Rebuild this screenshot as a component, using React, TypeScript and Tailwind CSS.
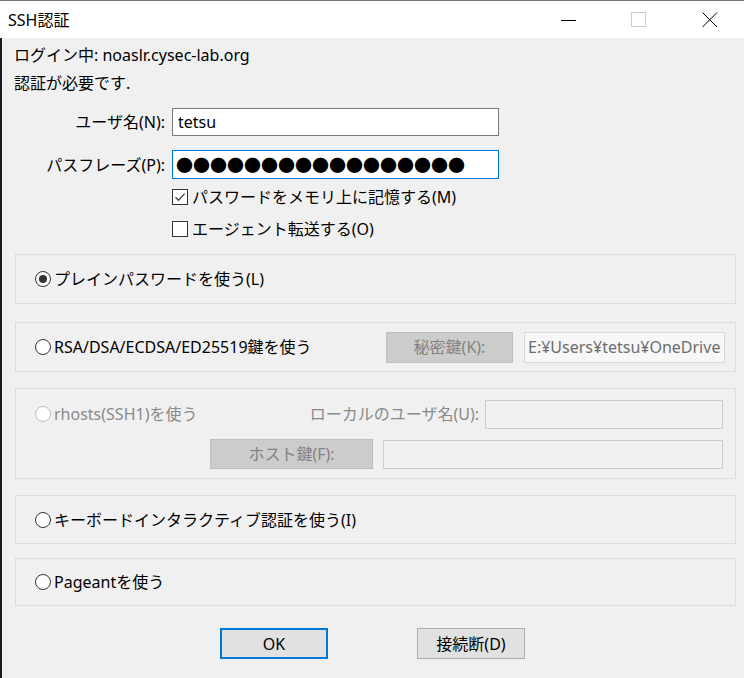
import React from 'react';

const font = { fontFamily: '"Noto Sans", "Noto Sans CJK JP", sans-serif' };

function Radio({ checked = false, disabled = false }: { checked?: boolean; disabled?: boolean }) {
  return (
    <span
      className={`flex h-[16px] w-[16px] shrink-0 items-center justify-center rounded-full border bg-white ${
        disabled ? 'border-[#bcbcbc] bg-[#f0f0f0]' : 'border-[#333333]'
      }`}
    >
      {checked && <span className="h-[8px] w-[8px] rounded-full bg-[#333333]" />}
    </span>
  );
}

function Checkbox({ checked = false }: { checked?: boolean }) {
  return (
    <span className="flex h-[16px] w-[16px] shrink-0 items-center justify-center border border-[#333333] bg-white">
      {checked && (
        <svg width="12" height="12" viewBox="0 0 12 12">
          <path d="M1.5 6.2 L4.6 9.2 L10.6 2.6" fill="none" stroke="#444" strokeWidth="1.4" />
        </svg>
      )}
    </span>
  );
}

function Group({ children, className = '' }: { children: React.ReactNode; className?: string }) {
  return <div className={`ml-[13px] mr-[8px] border border-[#dcdcdc] ${className}`}>{children}</div>;
}

export default function App() {
  return (
    <div className="flex h-[678px] w-[744px] flex-col overflow-hidden bg-[#f0f0f0] text-[16px] text-black" style={font}>
      {/* title bar */}
      <div className="flex h-[38px] shrink-0 items-center border-t border-[#767676] bg-white">
        <span className="ml-[8px] flex-1 text-[16px]">SSH認証</span>
        <div className="flex h-full items-center">
          <svg width="16" height="16" viewBox="0 0 16 16" className="mr-[54px]">
            <path d="M0 8.5 H15" stroke="#000" strokeWidth="1" />
          </svg>
          <svg width="16" height="16" viewBox="0 0 16 16" className="mr-[55px]">
            <rect x="0.5" y="0.5" width="14" height="14" fill="none" stroke="#cccccc" />
          </svg>
          <svg width="16" height="16" viewBox="0 0 16 16" className="mr-[26px]">
            <path d="M0.5 0.5 L15 15 M15 0.5 L0.5 15" stroke="#000" strokeWidth="1" />
          </svg>
        </div>
      </div>

      {/* body */}
      <div className="flex flex-1 flex-col border-l-2 border-[#1c1c1c]">
        <div className="pl-[12px] pt-[3px] leading-[28px]">
          <div>ログイン中: noaslr.cysec-lab.org</div>
          <div>認証が必要です.</div>
        </div>

        <div className="mt-[11px] flex items-center">
          <span className="w-[163px] text-right">ユーザ名(N):</span>
          <div className="ml-[7px] flex h-[28px] w-[327px] items-center border border-[#7a7a7a] bg-white pl-[5px]">tetsu</div>
        </div>
        <div className="mt-[14px] flex items-center">
          <span className="w-[163px] text-right">パスフレーズ(P):</span>
          <div
            className="ml-[7px] flex h-[29px] w-[327px] items-center overflow-hidden border border-[#0078d7] bg-white pl-[3px] text-[17px] leading-none"
            style={{ fontFamily: '"Noto Sans CJK JP", sans-serif' }}
          >
            ●●●●●●●●●●●●●●●●●
          </div>
        </div>
        <div className="ml-[170px] mt-[8px] flex h-[20px] items-center gap-[4px]">
          <Checkbox checked />
          <span>パスワードをメモリ上に記憶する(M)</span>
        </div>
        <div className="ml-[170px] mt-[12px] flex h-[20px] items-center gap-[4px]">
          <Checkbox />
          <span>エージェント転送する(O)</span>
        </div>

        <Group className="mt-[15px] flex h-[50px] items-center pl-[19px]">
          <Radio checked />
          <span className="ml-[3px]">プレインパスワードを使う(L)</span>
        </Group>

        <Group className="mt-[18px] flex h-[50px] items-center pl-[19px] pr-[10px]">
          <Radio />
          <span className="ml-[3px] flex-1">RSA/DSA/ECDSA/ED25519鍵を使う</span>
          <div className="flex h-[31px] w-[127px] items-center justify-center border border-[#bfbfbf] bg-[#cccccc] text-[#838383]">
            秘密鍵(K):
          </div>
          <div className="ml-[11px] flex h-[31px] w-[201px] items-center overflow-hidden whitespace-nowrap border border-[#d9d9d9] bg-[#f7f7f7] pl-[3px] text-[16px] text-[#6d6d6d]">
            E:¥Users¥tetsu¥OneDrive
          </div>
        </Group>

        <Group className="mt-[16px] flex h-[91px] flex-col pl-[19px] pr-[12px] pt-[10px]">
          <div className="flex h-[30px] items-center">
            <Radio disabled />
            <span className="ml-[3px] flex-1 text-[#8a8a8a]">rhosts(SSH1)を使う</span>
            <span className="text-[#8a8a8a]">ローカルのユーザ名(U):</span>
            <div className="ml-[6px] h-[29px] w-[238px] border border-[#cccccc] bg-[#f0f0f0]" />
          </div>
          <div className="mt-[10px] flex h-[30px] items-center justify-end">
            <div className="flex h-[30px] w-[163px] items-center justify-center border border-[#bfbfbf] bg-[#cccccc] text-[#838383]">
              ホスト鍵(F):
            </div>
            <div className="ml-[10px] h-[29px] w-[340px] border border-[#cccccc] bg-[#f0f0f0]" />
          </div>
        </Group>

        <Group className="mt-[16px] flex h-[49px] items-center pl-[19px]">
          <Radio />
          <span className="ml-[3px]">キーボードインタラクティブ認証を使う(I)</span>
        </Group>

        <Group className="mt-[14px] flex h-[48px] items-center pl-[19px]">
          <Radio />
          <span className="ml-[3px]">Pageantを使う</span>
        </Group>

        <div className="mt-[22px] flex">
          <button className="ml-[218px] flex h-[31px] w-[108px] items-center justify-center border-2 border-[#0078d7] bg-[#e1e1e1]">
            OK
          </button>
          <button className="ml-[89px] flex h-[31px] w-[108px] items-center justify-center border border-[#adadad] bg-[#e1e1e1]">
            接続断(D)
          </button>
        </div>
      </div>
    </div>
  );
}
